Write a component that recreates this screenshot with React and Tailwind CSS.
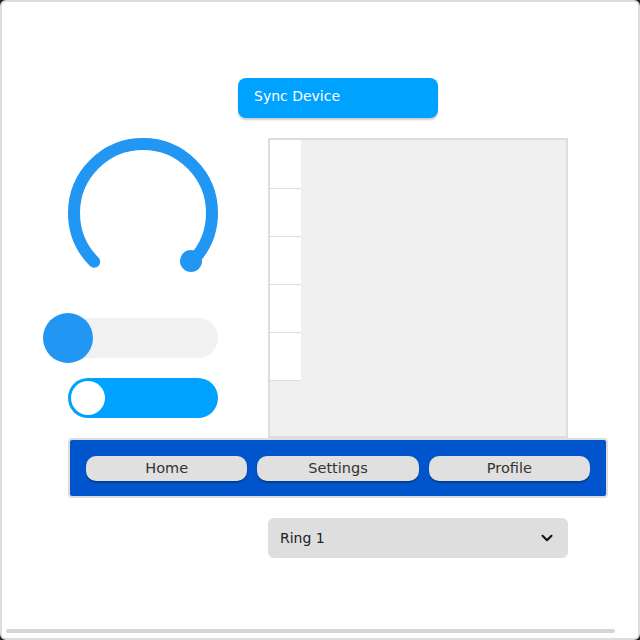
import { ChevronDown } from "lucide-react";

function Knob() {
  return (
    <svg width="150" height="140" viewBox="0 0 150 140" className="ml-[25px] block">
      <path
        d="M 26.2 123.8 A 69 69 0 1 1 123.8 123.8"
        fill="none"
        stroke="#2196f3"
        strokeWidth="12"
        strokeLinecap="round"
      />
      <circle cx="123" cy="123" r="11" fill="#2196f3" />
    </svg>
  );
}

function Slider() {
  return (
    <div className="relative mt-[35px] flex h-[50px] w-[175px] items-center">
      <div className="h-10 w-full rounded-full bg-[#f1f1f1]" />
      <div className="absolute left-0 top-0 h-[50px] w-[50px] rounded-full bg-[#2196f3]" />
    </div>
  );
}

function Toggle() {
  return (
    <div className="ml-[25px] mt-[15px] flex h-10 w-[150px] items-center rounded-full bg-[#00a2ff] px-[3px]">
      <div className="h-[34px] w-[34px] rounded-full bg-white" />
    </div>
  );
}

function Panel() {
  const rows = [0, 1, 2, 3, 4];
  return (
    <div className="ml-[50px] h-[300px] w-[300px] border-2 border-[#dddddd] bg-[#f0f0f0]">
      <div className="w-[31px] bg-white pt-px">
        {rows.map((r) => (
          <div key={r} className="h-12 border-b border-[#dddddd] bg-white" />
        ))}
      </div>
    </div>
  );
}

function NavBar() {
  const items = ["Home", "Settings", "Profile"];
  return (
    <div className="ml-[66px] flex h-[60px] w-[540px] items-center gap-[10px] rounded-[4px] border-2 border-[#dddddd] bg-[#0055cc] px-4">
      {items.map((item) => (
        <button
          key={item}
          className="h-[25px] flex-1 rounded-[10px] bg-[#e0e0e0] text-[14.5px] leading-[25px] text-[#333333] shadow-[0_2px_1px_rgba(0,0,0,0.25)]"
        >
          {item}
        </button>
      ))}
    </div>
  );
}

export default function App() {
  return (
    <div className="h-[640px] w-[640px] bg-[#222222]" style={{ fontFamily: "'DejaVu Sans', sans-serif" }}>
      <div className="flex h-full w-full flex-col rounded-[6px] border-2 border-[#dddddd] bg-white">
        <button className="ml-[236px] mt-[76px] h-10 w-[200px] rounded-[8px] bg-[#00a2ff] px-4 pb-[3px] text-left text-[14px] text-white shadow-[0_2px_2px_rgba(0,0,0,0.2)]">
          Sync Device
        </button>

        <div className="mt-5 flex items-start">
          <div className="ml-[41px] flex w-[175px] flex-col">
            <Knob />
            <Slider />
            <Toggle />
          </div>
          <Panel />
        </div>

        <NavBar />

        <div className="ml-[266px] mt-5 flex h-10 w-[300px] items-center justify-between rounded-[6px] bg-[#dedede] px-3 text-[14px] text-[#222222]">
          <span>Ring 1</span>
          <ChevronDown size={18} strokeWidth={2.75} className="text-[#111111]" />
        </div>

        <div className="mb-[5px] ml-1 mt-auto h-1 w-[609px] rounded-full bg-[#d6d6d6]" />
      </div>
    </div>
  );
}
